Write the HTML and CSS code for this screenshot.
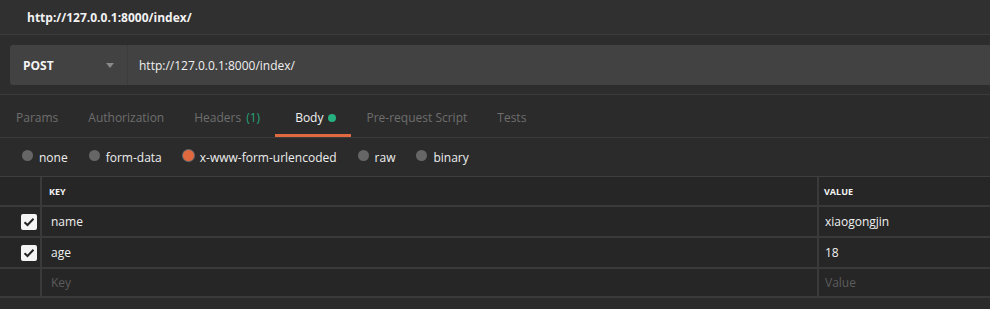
FILE: index.html
```html
<!DOCTYPE html>
<html lang="en">
<head>
    <meta charset="UTF-8">
    <title>http://127.0.0.1:8000/index/</title>
    <link rel="stylesheet" href="styles.css">
</head>
<body>
    <div class="tab-title">http://127.0.0.1:8000/index/</div>

    <!-- Request line -->
    <div class="request">
        <div class="url-box">
            <div class="method">
                <span>POST</span>
                <span class="caret"></span>
            </div>
            <div class="url">http://127.0.0.1:8000/index/</div>
        </div>
    </div>

    <!-- Request tabs -->
    <div class="tabs">
        <span class="tab">Params</span>
        <span class="tab">Authorization</span>
        <span class="tab">Headers <span class="count">(1)</span></span>
        <span class="tab active">Body <span class="dot"></span></span>
        <span class="tab">Pre-request Script</span>
        <span class="tab">Tests</span>
    </div>

    <!-- Body modes -->
    <div class="modes">
        <label class="mode"><span class="radio"></span>none</label>
        <label class="mode"><span class="radio"></span>form-data</label>
        <label class="mode"><span class="radio checked"></span>x-www-form-urlencoded</label>
        <label class="mode"><span class="radio"></span>raw</label>
        <label class="mode"><span class="radio"></span>binary</label>
    </div>

    <div class="kv">
        <div class="row head">
            <div class="cell check"></div>
            <div class="cell key">KEY</div>
            <div class="cell value">VALUE</div>
        </div>
        <div class="row">
            <div class="cell check"><span class="box">
                <svg width="12" height="10" viewBox="0 0 12 10"><path d="M1.5 5.2 L4.5 8 L10.5 1.8" fill="none" stroke="#222" stroke-width="2"/></svg>
            </span></div>
            <div class="cell key">name</div>
            <div class="cell value">xiaogongjin</div>
        </div>
        <div class="row">
            <div class="cell check"><span class="box">
                <svg width="12" height="10" viewBox="0 0 12 10"><path d="M1.5 5.2 L4.5 8 L10.5 1.8" fill="none" stroke="#222" stroke-width="2"/></svg>
            </span></div>
            <div class="cell key">age</div>
            <div class="cell value">18</div>
        </div>
        <div class="row last">
            <div class="cell check"></div>
            <div class="cell key placeholder">Key</div>
            <div class="cell value placeholder">Value</div>
        </div>
    </div>
</body>
</html>
```

FILE: styles.css
```css
body {
    margin: 0;
    font-family: 'Open Sans', 'Noto Sans', sans-serif;
    font-size: 12px;
    color: #e8e8e8;
    background: #2b2b2b;
    height: 309px;
    overflow: hidden;
}
.tab-title {
    height: 34px;
    line-height: 35px;
    padding-left: 27px;
    font-weight: 700;
    color: #f2f2f2;
    background: #303030;
    border-bottom: 1px solid #3b3b3b;
}
.request {
    padding: 10px 0 9px 10px;
    border-bottom: 1px solid #3b3b3b;
    background: #2d2d2d;
}
.url-box {
    display: flex;
    height: 40px;
    background: #424242;
    border-radius: 3px 0 0 3px;
}
.method {
    width: 118px;
    display: flex;
    align-items: center;
    justify-content: space-between;
    padding: 0 13px 0 13px;
    box-sizing: border-box;
    font-weight: 700;
    color: #f4f4f4;
    border-right: 1px solid #3c3c3c;
}
.caret {
    width: 0;
    height: 0;
    border-left: 4px solid transparent;
    border-right: 4px solid transparent;
    border-top: 5px solid #8a8a8a;
}
.url {
    display: flex;
    align-items: center;
    padding-left: 11px;
    color: #f0f0f0;
}
.tabs {
    height: 43px;
    display: flex;
    align-items: stretch;
    padding-left: 1px;
    border-bottom: 1px solid #3b3b3b;
    box-sizing: border-box;
}
.tab {
    display: flex;
    align-items: center;
    gap: 5px;
    color: #6e6e6e;
    padding: 6px 15px 0;
    border-bottom: 3px solid transparent;
}
.tab .count {
    color: #26a37a;
}
.tab.active {
    color: #f2f2f2;
    border-bottom-color: #e0693f;
    padding-left: 20px;
}
.dot {
    width: 8px;
    height: 8px;
    border-radius: 50%;
    background: #26b07f;
}
.modes {
    height: 38px;
    display: flex;
    align-items: center;
    padding-left: 22px;
    gap: 21px;
}
.mode {
    display: flex;
    align-items: center;
    gap: 6px;
    color: #eeeeee;
}
.radio {
    width: 11px;
    height: 11px;
    border-radius: 50%;
    background: #666;
    position: relative;
    top: -2px;
}
.radio.checked {
    background: #e0693f;
    box-shadow: 0 0 0 1px #6a6a6a;
}
.kv {
    border-top: 1px solid #3e3e3e;
    background: #262626;
}
.row {
    display: flex;
    height: 29px;
    border-bottom: 2px solid #3a3a3a;
}
.head {
    height: 28px;
}
.last {
    height: 27px;
}
.cell {
    display: flex;
    align-items: center;
}
.check {
    width: 42px;
    justify-content: flex-end;
    border-right: 2px solid #3a3a3a;
    padding-right: 3px;
    box-sizing: border-box;
}
.key {
    width: 777px;
    padding-left: 9px;
    border-right: 2px solid #3a3a3a;
    box-sizing: border-box;
    color: #f0f0f0;
}
.value {
    flex: 1;
    padding-left: 6px;
    color: #f0f0f0;
}
.head .key, .head .value {
    font-size: 9px;
    font-weight: 700;
    color: #f4f4f4;
    padding-left: 7px;
}
.head .value {
    padding-left: 5px;
}
.box {
    width: 16px;
    height: 16px;
    background: #f4f4f4;
    border-radius: 2px;
    display: flex;
    align-items: center;
    justify-content: center;
}
.placeholder {
    color: #5c5c5c;
}
```
